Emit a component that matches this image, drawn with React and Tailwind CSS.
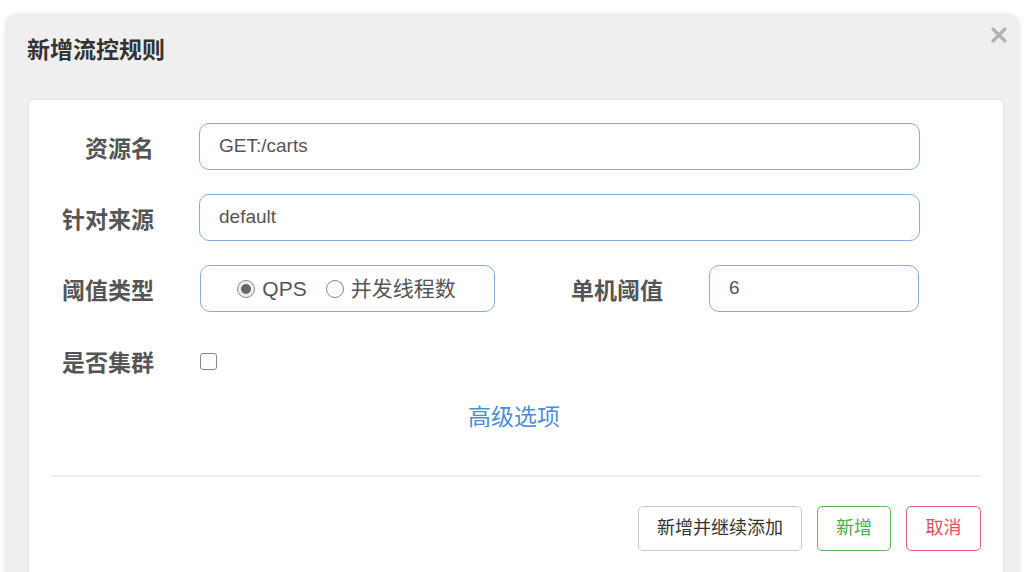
import React from "react";

const font = {
  fontFamily:
    '"Liberation Sans", Arial, "Noto Sans CJK SC", sans-serif',
};

const Label = ({ children }) => (
  <div className="w-[125px] shrink-0 text-right text-[23px] font-bold text-[#555] pt-[5px]">
    {children}
  </div>
);

const TextInput = ({ value, className = "" }) => (
  <div
    className={`h-[47px] flex items-center px-[19px] border border-[#86addb] rounded-[10px] bg-white text-[19px] text-[#555] ${className}`}
  >
    {value}
  </div>
);

export default function App() {
  return (
    <div className="w-[1024px] h-[572px] overflow-hidden bg-white" style={font}>
      {/* Dialog */}
      <div className="ml-[7px] mt-[16px] w-[1011px] h-[600px] bg-[#efefef] rounded-[9px] shadow-[0_0_6px_rgba(0,0,0,0.18)] relative">
        {/* Header */}
        <div className="h-[83px] flex items-center pl-[20px]">
          <h1 className="text-[23px] font-bold text-[#333] -mt-[15px]">
            新增流控规则
          </h1>
        </div>
        <button className="absolute right-[8px] top-[8px]">
          <svg width="22" height="22" viewBox="0 0 22 22">
            <path
              d="M5 5 L17 17 M17 5 L5 17"
              stroke="#b3b3b3"
              strokeWidth="3.2"
              strokeLinecap="round"
            />
          </svg>
        </button>

        {/* Card */}
        <div className="ml-[21px] w-[976px] bg-white border border-[#e3e3e3] rounded-[6px] pt-[23px] pb-[40px]">
          <div className="flex flex-col gap-[24px]">
            {/* 资源名 */}
            <div className="flex items-center">
              <Label>资源名</Label>
              <TextInput value="GET:/carts" className="ml-[45px] w-[721px]" />
            </div>

            {/* 针对来源 */}
            <div className="flex items-center">
              <Label>针对来源</Label>
              <TextInput value="default" className="ml-[45px] w-[721px]" />
            </div>

            {/* 阈值类型 */}
            <div className="flex items-center">
              <Label>阈值类型</Label>
              <div className="ml-[46px] w-[295px] h-[47px] border border-[#86addb] rounded-[10px] flex items-center justify-center gap-[19px] text-[21px] text-[#555] pr-[2px]">
                <span className="flex items-center gap-[7px]">
                  <span className="w-[18px] h-[18px] rounded-full border-[1.5px] border-[#888] bg-[#eee] flex items-center justify-center">
                    <span className="w-[10px] h-[10px] rounded-full bg-[#666]" />
                  </span>
                  QPS
                </span>
                <span className="flex items-center gap-[7px]">
                  <span className="w-[18px] h-[18px] rounded-full border-[1.5px] border-[#888] bg-white" />
                  并发线程数
                </span>
              </div>
              <div className="ml-[76px] text-[23px] font-bold text-[#555] pt-[5px]">
                单机阈值
              </div>
              <TextInput value="6" className="ml-[46px] w-[210px] px-[18px]" />
            </div>

            {/* 是否集群 */}
            <div className="flex items-center h-[50px]">
              <Label>是否集群</Label>
              <span className="ml-[46px] w-[17px] h-[17px] rounded-[3px] border-[1.5px] border-[#888] bg-white" />
            </div>
          </div>

          {/* 高级选项 */}
          <div className="mt-[14px] text-center">
            <span className="text-[23px] text-[#4a8fd6] pr-[4px]">
              高级选项
            </span>
          </div>

          {/* Divider */}
          <div className="mx-[22px] mt-[40px] border-t-2 border-[#ededed]" />

          {/* Buttons */}
          <div className="flex justify-end gap-[15px] pr-[22px] mt-[29px]">
            <button className="h-[45px] px-[18px] border border-[#ccc] rounded-[5px] text-[18px] text-[#333] bg-white">
              新增并继续添加
            </button>
            <button className="h-[45px] w-[74px] border border-[#5cb85c] rounded-[5px] text-[18px] text-[#4cae4c] bg-white">
              新增
            </button>
            <button className="h-[45px] w-[75px] border border-[#e0656c] rounded-[5px] text-[18px] text-[#e0525a] bg-white">
              取消
            </button>
          </div>
        </div>
      </div>
    </div>
  );
}
